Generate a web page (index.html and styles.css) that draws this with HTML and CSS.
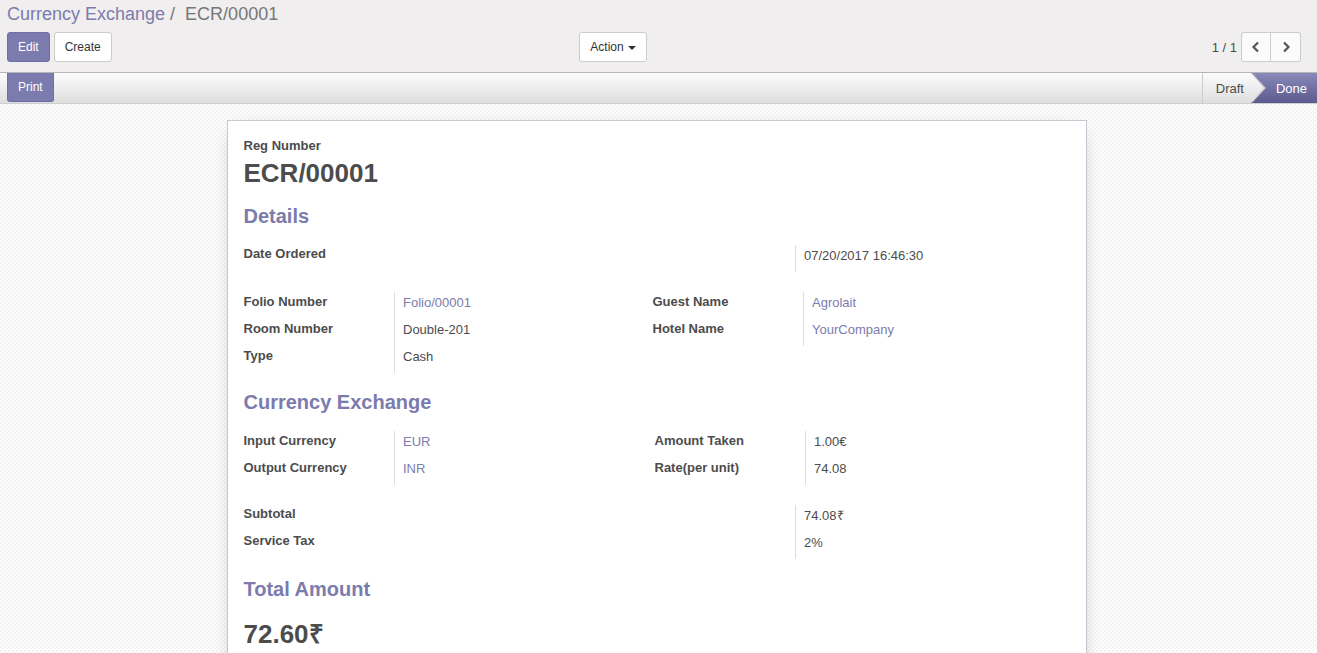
FILE: index.html
```html
<!DOCTYPE html>
<html>
<head>
<meta charset="utf-8">
<link rel="stylesheet" href="styles.css">
</head>
<body>
<div class="cp">
  <ol class="crumbs">
    <li><a class="crumb-link">Currency Exchange</a><span class="crumb-sep">/</span></li>
    <li class="crumb-active">ECR/00001</li>
  </ol>
  <div class="cp-row">
    <div class="cp-left">
      <div class="btns">
        <button class="btn btn-primary">Edit</button>
        <button class="btn btn-default">Create</button>
      </div>
      <button class="btn btn-default btn-action">Action <span class="caret"></span></button>
    </div>
    <div class="cp-right">
      <span class="pager-value">1 / 1</span>
      <div class="pager-btns">
        <button class="btn btn-default btn-pager"><svg width="10" height="12" viewBox="0 0 10 12"><path d="M7 1.5 L2.5 6 L7 10.5" fill="none" stroke="#555" stroke-width="2.2"/></svg></button>
        <button class="btn btn-default btn-pager"><svg width="10" height="12" viewBox="0 0 10 12"><path d="M3 1.5 L7.5 6 L3 10.5" fill="none" stroke="#555" stroke-width="2.2"/></svg></button>
      </div>
    </div>
  </div>
</div>
<div class="statusbar">
  <button class="btn btn-primary btn-print">Print</button>
  <div class="status">
    <span class="st st-draft">Draft</span>
    <span class="st st-done">Done</span>
  </div>
</div>
<div class="sheet-bg">
  <div class="sheet">
    <div class="title-label">Reg Number</div>
    <h1 class="title">ECR/00001</h1>
    <h2 class="sec">Details</h2>
    <table class="grp grp-wide">
      <tr><td class="lbl">Date Ordered</td><td class="val">07/20/2017 16:46:30</td></tr>
    </table>
    <div class="grp-pair gp-a">
      <table class="grp grp-half">
        <tr><td class="lbl">Folio Number</td><td class="val link">Folio/00001</td></tr>
        <tr><td class="lbl">Room Number</td><td class="val">Double-201</td></tr>
        <tr><td class="lbl">Type</td><td class="val">Cash</td></tr>
      </table>
      <table class="grp grp-half">
        <tr><td class="lbl">Guest Name</td><td class="val link">Agrolait</td></tr>
        <tr><td class="lbl">Hotel Name</td><td class="val link">YourCompany</td></tr>
      </table>
    </div>
    <h2 class="sec">Currency Exchange</h2>
    <div class="grp-pair gp-b">
      <table class="grp grp-half">
        <tr><td class="lbl">Input Currency</td><td class="val link">EUR</td></tr>
        <tr><td class="lbl">Output Currency</td><td class="val link">INR</td></tr>
      </table>
      <table class="grp grp-half">
        <tr><td class="lbl">Amount Taken</td><td class="val">1.00€</td></tr>
        <tr><td class="lbl">Rate(per unit)</td><td class="val">74.08</td></tr>
      </table>
    </div>
    <table class="grp grp-wide">
      <tr><td class="lbl">Subtotal</td><td class="val">74.08₹</td></tr>
      <tr><td class="lbl">Service Tax</td><td class="val">2%</td></tr>
    </table>
    <h2 class="sec">Total Amount</h2>
    <h1 class="total">72.60₹</h1>
  </div>
</div>
</body>
</html>
```
FILE: styles.css
```css
* { box-sizing: border-box; }
html, body { margin: 0; padding: 0; height: 100%; overflow: hidden; }
body {
  font-family: "Liberation Sans", Arial, sans-serif;
  font-size: 13px;
  color: #4c4c4c;
  background: #fff;
}
.btn {
  font-family: "Liberation Sans", Arial, sans-serif;
  font-size: 12px;
  line-height: 18px;
  padding: 5px 10px;
  border-radius: 3px;
  border: 1px solid #ccc;
  cursor: pointer;
  height: 30px;
}
.btn-primary {
  background: #7c7bad;
  border-color: #6f6ea5;
  color: #fff;
}
.btn-default {
  background: #fff;
  border-color: #ccc;
  color: #333;
}
.cp {
  background: #f0eeee;
  border-bottom: 1px solid #b5b5b8;
  padding: 3px 16px 10px 7px;
}
.crumbs {
  list-style: none;
  margin: 0;
  padding: 0;
  display: flex;
  font-size: 18px;
  line-height: 22px;
  height: 22px;
}
.crumb-link { color: #7c7bad; }
.crumb-sep { color: #777; padding: 0 10px 0 5px; }
.crumb-active { color: #777; }
.cp-row {
  display: flex;
  margin-top: 7px;
  align-items: center;
}
.cp-left {
  width: 640px;
  display: flex;
  justify-content: space-between;
}
.btns { display: flex; gap: 4px; }
.btn-action { padding: 5px 10px; color: #333; }
.caret {
  display: inline-block;
  width: 0; height: 0;
  border-top: 4px solid #333;
  border-left: 4px solid transparent;
  border-right: 4px solid transparent;
  vertical-align: middle;
  margin-left: 1px;
}
.cp-right {
  flex: 1;
  display: flex;
  justify-content: flex-end;
  align-items: center;
}
.pager-value { font-size: 13px; color: #4c4c4c; margin-right: 4px; }
.pager-btns { display: flex; }
.btn-pager {
  width: 30px;
  padding: 0;
  display: flex;
  align-items: center;
  justify-content: center;
  background: #fbfbfb;
}
.btn-pager:first-child { border-radius: 3px 0 0 3px; }
.btn-pager:last-child { border-radius: 0 3px 3px 0; border-left: 0; }
.statusbar {
  height: 31px;
  display: flex;
  justify-content: space-between;
  padding-left: 7px;
  background: linear-gradient(#fcfcfc, #dedede);
  border-bottom: 1px solid #cfcfcf;
}
.btn-print { height: 29px; border-radius: 0 0 3px 3px; border-top: 0; padding: 4px 10px 5px; }
.status { display: flex; height: 30px; }
.st {
  display: flex;
  align-items: center;
  height: 30px;
  font-size: 13px;
}
.st-draft {
  position: relative;
  z-index: 1;
  padding: 0 7px 0 13px;
  border-left: 1px solid #ccc;
  color: #4c4c4c;
  background: linear-gradient(#fcfcfc, #dedede);
}
.st-draft::before, .st-draft::after {
  content: "";
  position: absolute;
  top: 0;
  height: 30px;
  width: 14px;
  clip-path: polygon(0 0, 100% 50%, 0 100%);
}
.st-draft::before { right: -15px; background: #c9c9c9; }
.st-draft::after { right: -13px; width: 13px; background: linear-gradient(#fcfcfc, #dedede); }
.st-done {
  padding: 0 10px 0 25px;
  color: #fff;
  background: linear-gradient(#8a89ba, #5c5a8e);
}
.sheet-bg {
  height: 550px;
  padding: 16px 4px 0 0;
  background-color: #fcfcfc;
  background-image: repeating-conic-gradient(#f3f3f3 0 25%, #fefefe 0 50%);
  background-size: 4px 4px;
}
.sheet {
  width: 860px;
  margin: 0 auto;
  background: #fff;
  border: 1px solid #c8c8d3;
  box-shadow: 0 5px 20px -10px rgba(0,0,0,0.4);
  padding: 16px 16px 40px;
  min-height: 600px;
}
.title-label { font-weight: bold; line-height: 17px; }
.title {
  margin: 4px 0 0;
  font-size: 26px;
  line-height: 30px;
  font-weight: bold;
}
.sec {
  margin: 17px 0 0;
  font-size: 20px;
  line-height: 22px;
  font-weight: bold;
  color: #7c7bad;
}
.grp-pair + .sec { margin-top: 18px; }
.grp-wide + .sec { margin-top: 19px; }
.grp {
  border-collapse: collapse;
  border-spacing: 0;
}
.lbl {
  font-weight: bold;
  vertical-align: top;
  padding: 1px 0 8px 0;
  line-height: 18px;
  border-right: 1px solid #ddd;
  white-space: nowrap;
}
.val {
  vertical-align: top;
  padding: 2px 8px 7px 8px;
  line-height: 18px;
}
.link { color: #7c7bad; }
.grp-wide { width: 826px; margin-top: 18px; }
.grp-wide .lbl { width: 552px; }
.grp-wide .lbl { padding-top: 0; padding-bottom: 9px; }
.grp-wide .val { padding-top: 2px; padding-bottom: 7px; }
.grp-pair { display: flex; align-items: flex-start; margin-top: 20px; }
.sec + .grp-pair { margin-top: 18px; }
.grp-half .lbl { width: 151px; }
.gp-a .grp-half:first-child { width: 409px; }
.gp-b .grp-half:first-child { width: 411px; }
.grp-pair .grp-half:last-child { flex: 1; }
.grp-pair + .grp-wide { margin-top: 20px; }
.total {
  margin: 19px 0 0;
  font-size: 26px;
  line-height: 30px;
  font-weight: bold;
}
```
